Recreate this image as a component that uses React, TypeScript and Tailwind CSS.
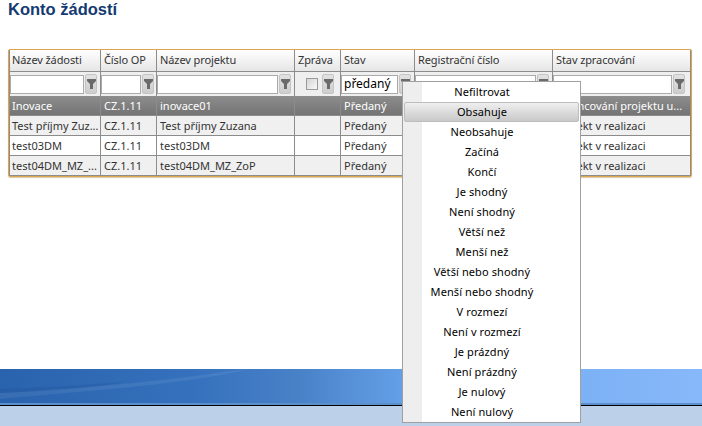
const columns = ['Název žádosti', 'Číslo OP', 'Název projektu', 'Zpráva', 'Stav', 'Registrační číslo', 'Stav zpracování'];

const rows = [
  ['Inovace', 'CZ.1.11', 'inovace01', '', 'Předaný', '', 'Financování projektu u...'],
  ['Test příjmy Zuz...', 'CZ.1.11', 'Test příjmy Zuzana', '', 'Předaný', '', 'Projekt v realizaci'],
  ['test03DM', 'CZ.1.11', 'test03DM', '', 'Předaný', '', 'Projekt v realizaci'],
  ['test04DM_MZ_...', 'CZ.1.11', 'test04DM_MZ_ZoP', '', 'Předaný', '', 'Projekt v realizaci'],
];

const menuItems = [
  'Nefiltrovat', 'Obsahuje', 'Neobsahuje', 'Začíná', 'Končí', 'Je shodný', 'Není shodný', 'Větší než', 'Menší než',
  'Větší nebo shodný', 'Menší nebo shodný', 'V rozmezí', 'Není v rozmezí', 'Je prázdný', 'Není prázdný', 'Je nulový', 'Není nulový',
];

const gridCols = 'grid grid-cols-[91px_56px_138px_46px_74px_138px_138px]';

function FilterButton() {
  return (
    <div className="flex h-[20px] w-[12px] shrink-0 items-center justify-center rounded-[2px] border border-[#c4c4c4] bg-gradient-to-b from-[#e2e2e2] to-[#cdcdcd]">
      <svg width="9" height="12" viewBox="0 0 9 12">
        <path d="M0 1h9v2L6 6v5H3V6L0 3z" fill="#6a6a6a" />
      </svg>
    </div>
  );
}

function FilterCell({ value, checkbox, width }: { value?: string; checkbox?: boolean; width: string }) {
  return (
    <div className="flex h-[24px] items-center gap-px border-r border-[#8c8c8c]">
      {checkbox ? (
        <div className="ml-[11px] mr-[3px] h-[12px] w-[12px] border border-[#9a9a9a] bg-gradient-to-br from-[#d4d4d4] to-[#fafafa]" />
      ) : (
        <div className={`flex h-[19px] items-center border border-[#ababab] bg-white pl-[2px] text-[12px] text-black ${width}`}>{value}</div>
      )}
      <FilterButton />
    </div>
  );
}

export default function App() {
  return (
    <div className="relative flex h-[426px] w-[702px] flex-col overflow-hidden bg-white font-['Noto_Sans','DejaVu_Sans',sans-serif] text-[11px] text-[#333]">
      <h1 className="pl-[8px] font-['Liberation_Sans',sans-serif] text-[16.5px] font-bold leading-[18px] text-[#153a72]">Konto žádostí</h1>

      <div className="ml-[8px] mt-[31px] w-[684px] rounded-[2px] border border-[#dca64e] shadow-[0_1px_1px_#d9c8a8]">
        <div className="border-l border-[#8c8c8c]">
          <div className={`${gridCols} h-[22px] border-b border-[#8c8c8c] bg-gradient-to-b from-white to-[#e6e6e6]`}>
            {columns.map((c) => (
              <div key={c} className="flex items-center border-r border-[#8c8c8c] pl-[3px] tracking-[-0.1px] first:pl-[2px]">{c}</div>
            ))}
          </div>

          <div className={`${gridCols} bg-[#efefef]`}>
            <FilterCell width="w-[74px]" />
            <FilterCell width="w-[40px]" />
            <FilterCell width="w-[121px]" />
            <FilterCell checkbox width="" />
            <FilterCell value="předaný" width="w-[57px]" />
            <FilterCell width="w-[121px]" />
            <FilterCell width="w-[119px]" />
          </div>

          {rows.map((row, i) => (
            <div
              key={i}
              className={`${gridCols} h-[20px] border-b border-[#8c8c8c] ${
                i === 0 ? 'bg-gradient-to-b from-[#8d8d8d] to-[#747474] text-white' : i % 2 === 0 ? 'bg-white' : 'bg-[#f0f0f0]'
              }`}
            >
              {row.map((cell, j) => (
                <div key={j} className="flex items-center overflow-hidden whitespace-nowrap border-r border-[#8c8c8c] pl-[3px] pt-px first:pl-[2px]">{cell}</div>
              ))}
            </div>
          ))}
        </div>
      </div>

      <div className="mt-auto">
        <div className="relative h-[36px] border-b-2 border-[#5f8fcb] bg-[linear-gradient(90deg,#2a63ad_0%,#3571bd_28%,#4a82c8_43%,#639fe6_57%,#74acf2_70%,#87b8fa_100%)]">
          <svg className="absolute inset-0" width="400" height="34" viewBox="0 0 400 34">
            <path d="M0 24C70 20 150 14 230 2l20-2C170 18 80 22 0 30z" fill="#ffffff" opacity="0.07" />
            <path d="M0 20C50 18 90 16 130 12C90 20 40 22 0 24z" fill="#1d4f92" opacity="0.25" />
          </svg>
        </div>
        <div className="h-px bg-black" />
        <div className="h-[20px] bg-[#bcd0ea]" />
      </div>

      {/* Filter menu */}
      <div className="absolute left-[402px] top-[81px] w-[179px] border border-[#a0a0a0] bg-white">
        <div className="absolute inset-y-0 left-0 w-[19px] bg-[#eeeeee]" />
        {menuItems.map((item) => (
          <div
            key={item}
            className={`relative flex h-[20px] items-center justify-center pr-[19px] tracking-[0.1px] text-black ${
              item === 'Obsahuje' ? 'mx-px rounded-[2px] border border-[#bdbdbd] bg-gradient-to-b from-[#efefef] to-[#c9c9c9]' : ''
            }`}
          >
            {item}
          </div>
        ))}
      </div>
    </div>
  );
}
